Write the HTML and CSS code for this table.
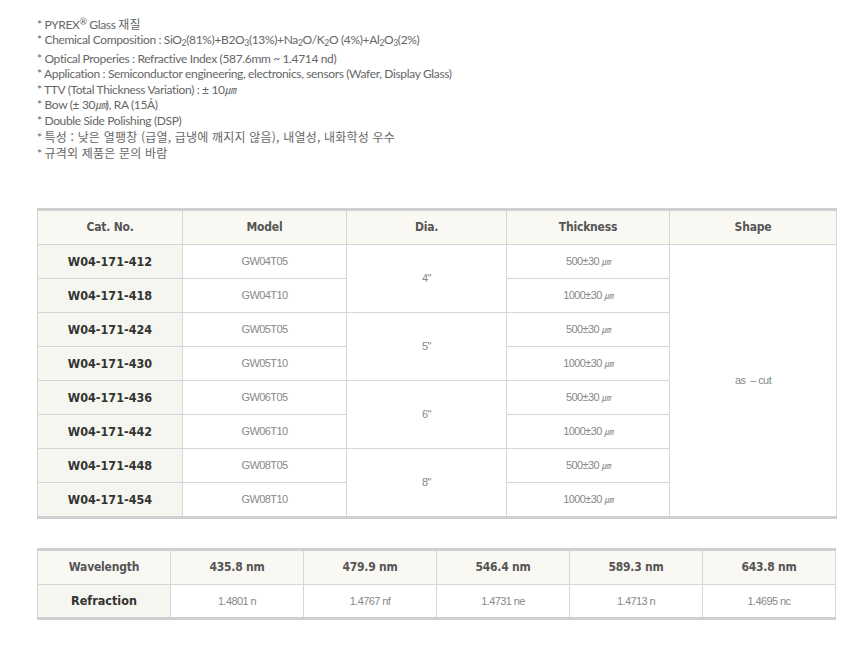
FILE: index.html
```html
<!DOCTYPE html>
<html lang="ko">
<head>
<meta charset="utf-8">
<link rel="stylesheet" href="styles.css">
</head>
<body>
<div class="page">
  <ul class="specs">
    <li>* PYREX<sup>®</sup> Glass <span class="kr">재질</span></li>
    <li class="tall">* Chemical Composition : SiO<sub>2</sub>(81%)+B2O<sub>3</sub>(13%)+Na<sub>2</sub>O/K<sub>2</sub>O (4%)+Al<sub>2</sub>O<sub>3</sub>(2%)</li>
    <li>* Optical Properies : Refractive Index (587.6mm ~ 1.4714 nd)</li>
    <li>* Application : Semiconductor engineering, electronics, sensors (Wafer, Display Glass)</li>
    <li>* TTV (Total Thickness Variation) : ± 10<i class="mu">㎛</i></li>
    <li>* Bow (± 30<i class="mu">㎛</i>), RA (15Å)</li>
    <li>* Double Side Polishing (DSP)</li>
    <li class="krline">* <span class="kr">특성 : 낮은 열팽창 (급열, 급냉에 깨지지 않음), 내열성, 내화학성 우수</span></li>
    <li class="krline">* <span class="kr">규격외 제품은 문의 바람</span></li>
  </ul>

  <table class="grid main">
    <colgroup>
      <col class="c1"><col class="c2"><col class="c3"><col class="c4"><col class="c5">
    </colgroup>
    <thead>
      <tr><th>Cat. No.</th><th>Model</th><th>Dia.</th><th>Thickness</th><th>Shape</th></tr>
    </thead>
    <tbody>
      <tr><th class="cat">W04-171-412</th><td>GW04T05</td><td rowspan="2">4"</td><td>500±30 <span class="um">㎛</span></td><td rowspan="8">as &nbsp;– cut</td></tr>
      <tr><th class="cat">W04-171-418</th><td>GW04T10</td><td>1000±30 <span class="um">㎛</span></td></tr>
      <tr><th class="cat">W04-171-424</th><td>GW05T05</td><td rowspan="2">5"</td><td>500±30 <span class="um">㎛</span></td></tr>
      <tr><th class="cat">W04-171-430</th><td>GW05T10</td><td>1000±30 <span class="um">㎛</span></td></tr>
      <tr><th class="cat">W04-171-436</th><td>GW06T05</td><td rowspan="2">6"</td><td>500±30 <span class="um">㎛</span></td></tr>
      <tr><th class="cat">W04-171-442</th><td>GW06T10</td><td>1000±30 <span class="um">㎛</span></td></tr>
      <tr><th class="cat">W04-171-448</th><td>GW08T05</td><td rowspan="2">8"</td><td>500±30 <span class="um">㎛</span></td></tr>
      <tr><th class="cat">W04-171-454</th><td>GW08T10</td><td>1000±30 <span class="um">㎛</span></td></tr>
    </tbody>
  </table>

  <table class="grid refr">
    <thead>
      <tr><th>Wavelength</th><th>435.8 nm</th><th>479.9 nm</th><th>546.4 nm</th><th>589.3 nm</th><th>643.8 nm</th></tr>
    </thead>
    <tbody>
      <tr><th class="cat">Refraction</th><td>1.4801 n</td><td>1.4767 nf</td><td>1.4731 ne</td><td>1.4713 n</td><td>1.4695 nc</td></tr>
    </tbody>
  </table>
</div>
</body>
</html>
```
FILE: styles.css
```css
html, body {
  margin: 0;
  padding: 0;
  background: #fff;
}
.page {
  padding: 16px 0 0 37px;
  width: 799px;
  font-family: "Lato", "Noto Sans CJK KR", sans-serif;
}
.specs {
  list-style: none;
  margin: 0;
  padding: 0;
  font-size: 12px;
  color: #666;
  letter-spacing: -0.35px;
}
.specs li {
  height: 15.6px;
  line-height: 15.6px;
  white-space: nowrap;
}
.specs li.tall {
  height: 19px;
  line-height: 16px;
}
.specs li.krline {
  height: 16.2px;
  line-height: 16.2px;
}
.specs .kr {
  font-family: "Noto Sans CJK KR", sans-serif;
  font-size: 12px;
  letter-spacing: 0.2px;
}
.specs .mu {
  font-family: "Noto Sans CJK KR", sans-serif;
  font-size: 11px;
}
.specs sup {
  font-size: 9px;
  line-height: 0;
  vertical-align: 4px;
}
.specs sub {
  font-size: 8.5px;
  line-height: 0;
  vertical-align: -2px;
}
.grid {
  width: 799px;
  border-collapse: collapse;
  table-layout: fixed;
  border-top: 3px solid #cfcfcf;
  border-bottom: 3px solid #cfcfcf;
}
.grid th, .grid td {
  border: 1px solid #d6d6d6;
  height: 33px;
  padding: 0;
  text-align: center;
  vertical-align: middle;
}
.grid tr:first-child th, .grid tr:first-child td {
  border-top: 0;
}
.grid thead th {
  background: #faf8f3;
  color: #555;
  font-family: "DejaVu Sans Condensed", "DejaVu Sans", sans-serif;
  font-weight: bold;
  font-size: 12px;
  letter-spacing: -0.2px;
}
.grid th.cat {
  background: #f5f6f0;
  color: #333;
  font-family: "DejaVu Sans Condensed", "DejaVu Sans", sans-serif;
  font-weight: bold;
  font-size: 12.5px;
}
.grid td {
  color: #888;
  font-family: "Liberation Sans", sans-serif;
  font-size: 11px;
  letter-spacing: -0.6px;
}
.main {
  margin-top: 47px;
}
.main .c1 { width: 145px; }
.main .c2 { width: 164px; }
.main .c3 { width: 160px; }
.main .c4 { width: 163px; }
.main .c5 { width: 167px; }
.um {
  font-family: "Noto Sans CJK KR", sans-serif;
  font-size: 9px;
  font-style: italic;
}
.refr {
  margin-top: 29px;
}
.refr thead th {
  height: 33px;
}
.refr tbody th, .refr tbody td {
  height: 32px;
}
```
